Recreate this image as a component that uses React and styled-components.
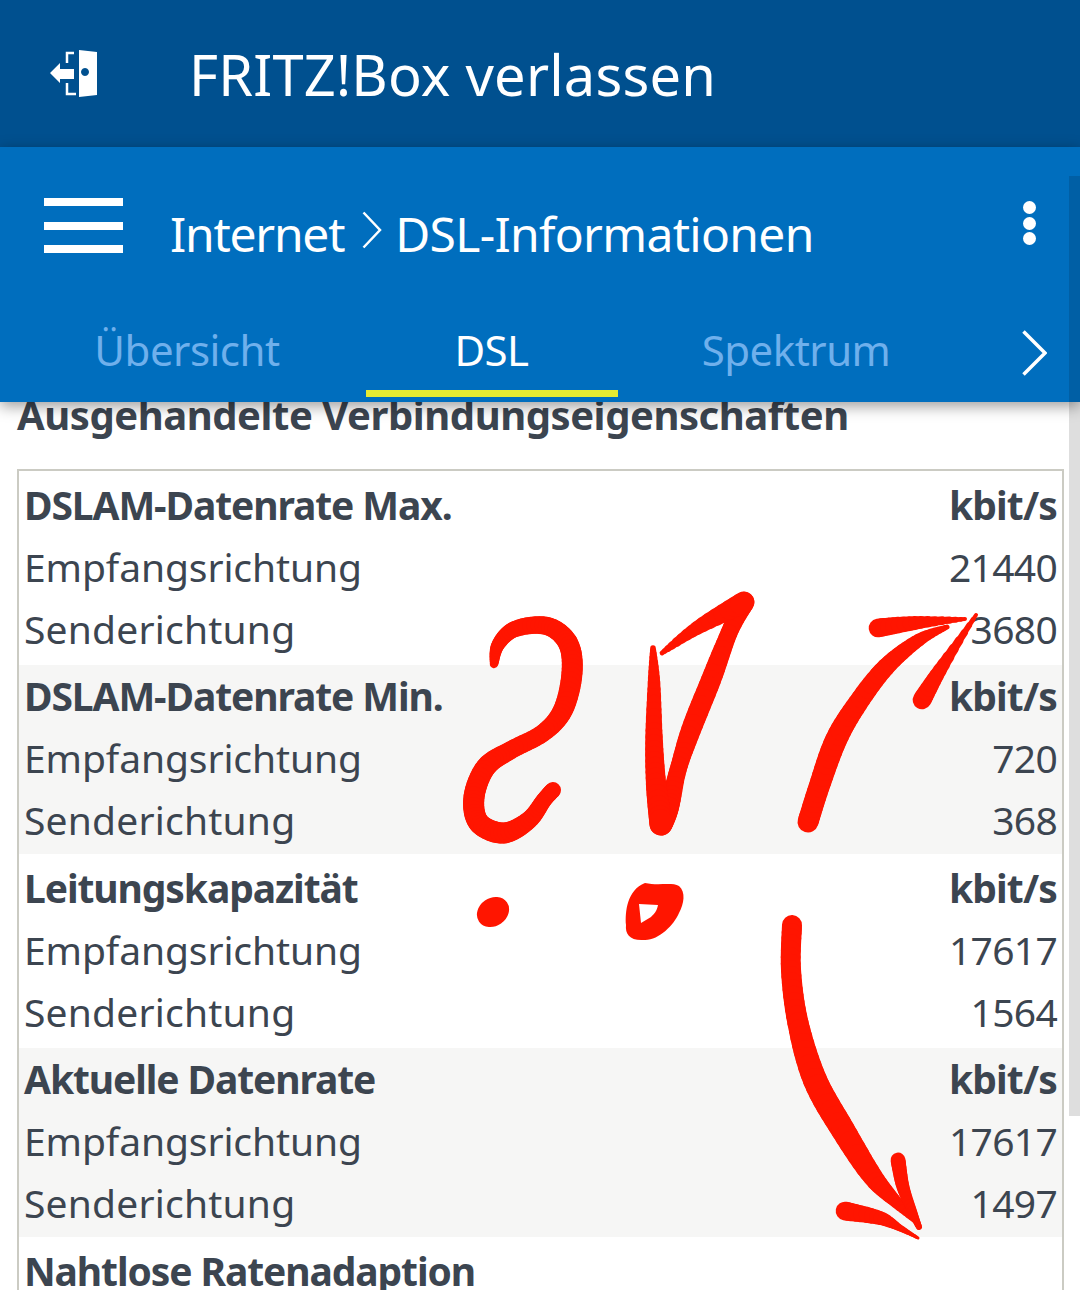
import React from 'react'
import styled, { createGlobalStyle } from 'styled-components'

const Global = createGlobalStyle`
html, body {
  margin: 0;
  padding: 0;
  background: #fff;
}
* { box-sizing: border-box; }
`
const Page = styled.div`
position: relative;
width: 1080px;
height: 1290px;
overflow: hidden;
font-family: "Noto Sans", "Open Sans", sans-serif;
color: #3C4550;
background: #fff;
`
const TopBar = styled.header`
height: 147px;
background: #00508F;
color: #fff;
display: flex;
align-items: center;
padding-left: 50px;
`
const TopTitle = styled.span`
margin-left: 91px;
font-size: 56px;
letter-spacing: 0.2px;
line-height: 1;
`
const NavBar = styled.nav`
position: relative;
z-index: 2;
height: 255px;
background: #006EBE;
box-shadow: 0 4px 14px rgba(0, 0, 0, 0.4);
color: #fff;
display: flex;
flex-direction: column;
`
const NavRow = styled.div`
height: 170px;
display: flex;
align-items: center;
padding: 0 44px;
`
const Burger = styled.div`
width: 79px;
display: flex;
flex-direction: column;
gap: 15.5px;
margin-top: -13px;
span {
  display: block;
  height: 8px;
  background: #fff;
}
`
const Crumbs = styled.div`
flex: 1;
margin-left: 47px;
padding-top: 4px;
display: flex;
align-items: center;
font-size: 48px;
letter-spacing: -0.7px;
line-height: 1;
`
const CrumbRoot = styled.span`
letter-spacing: -1.25px;
`
const CrumbArrow = styled.span`
margin: -8px 13px 0 18px;
`
const Dots = styled.div`
display: flex;
flex-direction: column;
gap: 2.5px;
margin-top: -18px;
span {
  width: 13px;
  height: 13px;
  border-radius: 50%;
  background: #fff;
}
`
const TabRow = styled.div`
height: 85px;
display: flex;
align-items: stretch;
padding-left: 61px;
gap: 52.5px;
position: relative;
`
const Tab = styled.div`
width: 252px;
height: 80px;
display: flex;
align-items: center;
justify-content: center;
padding-bottom: 8px;
font-size: 42px;
letter-spacing: -0.5px;
color: ${(p) => (p.$active ? '#fff' : '#6FB0EC')};
border-bottom: 7px solid ${(p) => (p.$active ? '#E6EB32' : 'transparent')};
`
const TabNext = styled.div`
position: absolute;
left: 1022px;
top: 13px;
`
const Content = styled.main`
padding: 0 16px 0 17px;
`
const Heading = styled.h2`
margin: -12px 0 29px;
font-size: 40px;
line-height: 50px;
font-weight: 700;
letter-spacing: -0.45px;
white-space: nowrap;
`
const Table = styled.section`
border: 2px solid #CBCBC3;
border-bottom: none;
`
const Group = styled.div`
padding: ${(p) => (p.$shaded ? '1px 0 2.5px' : '3px 0 4.5px')};
background: ${(p) => (p.$shaded ? '#F6F6F5' : '#fff')};
`
const Row = styled.div`
height: 62px;
padding: 0 5px 2px;
display: flex;
align-items: center;
justify-content: space-between;
font-size: 39px;
letter-spacing: ${(p) => (p.$bold ? '-1.1px' : '-0.1px')};
font-weight: ${(p) => (p.$bold ? 700 : 400)};
`
const Unit = styled.span`
letter-spacing: -0.85px;
`
const Value = styled.span`
letter-spacing: -0.7px;
`
const SendLabel = styled.span`
letter-spacing: 0.2px;
`
const Scrollbar = styled.div`
position: absolute;
z-index: 3;
top: 176px;
right: 0;
width: 11px;
height: 940px;
background: rgba(0, 0, 0, 0.13);
`
const Scribble = styled.svg`
position: absolute;
z-index: 1;
left: 0;
top: 0;
pointer-events: none;
`

const groups = [
  { title: 'DSLAM-Datenrate Max.', down: '21440', up: '3680' },
  { title: 'DSLAM-Datenrate Min.', down: '720', up: '368', shaded: true },
  { title: 'Leitungskapazität', down: '17617', up: '1564' },
  { title: 'Aktuelle Datenrate', down: '17617', up: '1497', shaded: true },
]

// hand drawn strokes: [x, y, width] points, smoothed at runtime
const strokes = [
  [[494, 664, 8], [498, 645, 13], [515, 629, 16], [547, 626, 18], [568, 643, 20], [572, 673, 21], [563, 710, 20], [543, 733, 18], [511, 750, 18], [486, 767, 20], [474, 797, 21], [479, 823, 21], [504, 833, 21], [529, 820, 18], [544, 800, 16], [553, 790, 16]],
  [[744, 602, 21], [729, 633, 17], [711, 680, 20], [691, 730, 20], [678, 770, 17], [669, 807, 20], [661, 824, 23]],
  [[653, 648, 5], [654, 683, 12], [654, 737, 17], [656, 783, 20], [661, 824, 23]],
  [[662, 653, 4], [697, 628, 13], [744, 602, 21]],
  [[808, 822, 21], [819, 787, 21], [836, 740, 22], [858, 703, 20], [886, 667, 18], [919, 640, 13], [947, 627, 5]],
  [[878, 628, 19], [915, 623, 14], [965, 619, 4]],
  [[922, 700, 19], [940, 670, 14], [976, 615, 4]],
  [[792, 925, 20], [791, 970, 20], [798, 1023, 21], [815, 1080, 24], [843, 1130, 24], [873, 1177, 20], [897, 1203, 12], [917, 1223, 4]],
  [[898, 1160, 15], [903, 1187, 13], [913, 1213, 9], [919, 1227, 6]],
  [[845, 1211, 19], [880, 1218, 14], [900, 1228, 7], [918, 1238, 3]],
]

const smooth = (pts) => {
  const out = []
  for (let i = 0; i < pts.length - 1; i++) {
    const a = pts[Math.max(i - 1, 0)]
    const b = pts[i]
    const c = pts[i + 1]
    const d = pts[Math.min(i + 2, pts.length - 1)]
    for (let s = 0; s < 8; s++) {
      const t = s / 8
      out.push(b.map((_, k) =>
        0.5 * (2 * b[k] + (c[k] - a[k]) * t + (2 * a[k] - 5 * b[k] + 4 * c[k] - d[k]) * t * t + (3 * b[k] - a[k] - 3 * c[k] + d[k]) * t * t * t)
      ))
    }
  }
  out.push(pts[pts.length - 1])
  return out
}

const Stroke = ({ points }) => {
  const line = smooth(points)
  return line.slice(1).map((p, i) => (
    <line key={i} x1={line[i][0]} y1={line[i][1]} x2={p[0]} y2={p[1]} strokeWidth={p[2]} />
  ))
}

const ExitIcon = () => (
  <svg width="48" height="48" viewBox="0 0 48 48" fill="#fff">
    <path d="M29 0 L47 2 V45 L29 47 Z M35 18 a4 4 0 1 0 0.01 0 Z" fillRule="evenodd" />
    <path d="M0 23 L10 13 V19 H24 V29 H10 V33 Z" />
    <path d="M24 3 H17 V13 M17 33 V44 H26" fill="none" stroke="#fff" strokeWidth="2.5" />
  </svg>
)

const Chevron = ({ w, h, sw }) => (
  <svg width={w} height={h} viewBox={`0 0 ${w} ${h}`} fill="none" stroke="#fff" strokeWidth={sw} style={{ display: 'block' }}>
    <path d={`M1.5 1.5 L${w - 2} ${h / 2} L1.5 ${h - 1.5}`} />
  </svg>
)

export default function App() {
  return (
    <Page>
      <Global />
      <TopBar>
        <ExitIcon />
        <TopTitle>FRITZ!Box verlassen</TopTitle>
      </TopBar>
      <NavBar>
        <NavRow>
          <Burger><span /><span /><span /></Burger>
          <Crumbs>
            <CrumbRoot>Internet</CrumbRoot>
            <CrumbArrow><Chevron w={20} h={38} sw={2.5} /></CrumbArrow>
            DSL-Informationen
          </Crumbs>
          <Dots><span /><span /><span /></Dots>
        </NavRow>
        <TabRow>
          <Tab>Übersicht</Tab>
          <Tab $active>DSL</Tab>
          <Tab>Spektrum</Tab>
          <TabNext><Chevron w={25} h={46} sw={3.5} /></TabNext>
        </TabRow>
      </NavBar>
      <Content>
        <Heading>Ausgehandelte Verbindungseigenschaften</Heading>
        <Table>
          {groups.map((g) => (
            <Group key={g.title} $shaded={g.shaded}>
              <Row $bold><span>{g.title}</span><Unit>kbit/s</Unit></Row>
              <Row><span>Empfangsrichtung</span><Value>{g.down}</Value></Row>
              <Row><SendLabel>Senderichtung</SendLabel><Value>{g.up}</Value></Row>
            </Group>
          ))}
          <Group>
            <Row $bold><span>Nahtlose Ratenadaption</span></Row>
          </Group>
        </Table>
      </Content>
      <Scribble width="1080" height="1290" stroke="#FF1500" strokeLinecap="round" fill="#FF1500">
        {strokes.map((s, i) => <Stroke key={i} points={s} />)}
        <ellipse cx="493" cy="912" rx="17" ry="14" transform="rotate(-35 493 912)" stroke="none" />
        <path
          stroke="none"
          fillRule="evenodd"
          d="M645 883 C658 886 672 882 679 886 C686 892 684 904 679 913 C674 925 658 941 644 940 C630 941 625 934 626 925 C625 912 627 890 645 883 Z M639 904 L658 905 C657 911 654 914 651 917 L641 923 Z"
        />
      </Scribble>
      <Scrollbar />
    </Page>
  )
}
